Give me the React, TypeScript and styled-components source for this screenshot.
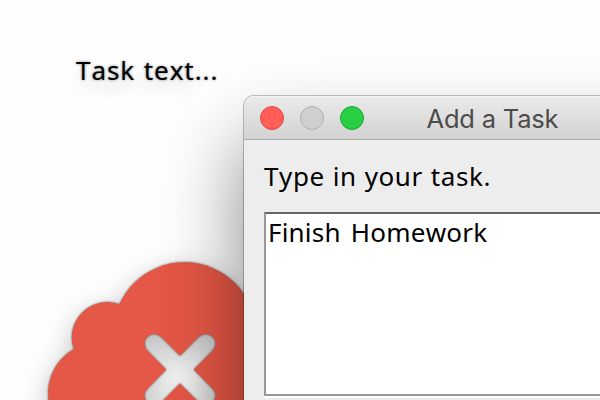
import React from "react";
import styled, { createGlobalStyle } from "styled-components";

const GlobalStyle = createGlobalStyle`
  * { box-sizing: border-box; }
  body { margin: 0; background: #fff; overflow: hidden; }
`;

const Desktop = styled.main`
  position: relative;
  width: 600px;
  height: 400px;
  overflow: hidden;
  background: #fefefe;
  color: #000;
  font-family: "Noto Sans", "Liberation Sans", sans-serif;
  font-size: 26px;
  line-height: 36px;
  font-kerning: none;
`;

const TaskLabel = styled.p`
  margin: 0;
  padding: 52px 0 0 76px;
  white-space: nowrap;
  letter-spacing: 0.95px;
  word-spacing: 0.8px;
  -webkit-text-stroke: 0.15px #000;
  text-shadow: 0 0 3px rgba(0, 0, 0, 0.45), 0 9px 18px rgba(0, 0, 0, 0.2);
`;

const CloudArt = styled.svg`
  position: absolute;
  left: 0;
  top: 220px;
  overflow: visible;
  filter: drop-shadow(0 0 1px rgba(0, 0, 0, 0.6)) drop-shadow(0 9px 14px rgba(0, 0, 0, 0.25));
`;

const DialogWindow = styled.section`
  position: absolute;
  left: 244px;
  top: 96px;
  width: 560px;
  height: 440px;
  border-radius: 10px 10px 0 0;
  background: #ededed;
  box-shadow: 0 0 0 1px rgba(0, 0, 0, 0.24), 0 46px 80px rgba(0, 0, 0, 0.48);
`;

const TitleBar = styled.header`
  display: flex;
  align-items: center;
  height: 44px;
  padding-left: 16px;
  border-radius: 10px 10px 0 0;
  border-bottom: 1px solid #afafaf;
  background: linear-gradient(#ebebeb, #d2d2d2);
  box-shadow: inset 0 1px 0 #f5f5f5;
`;

const Lights = styled.div`
  display: flex;
  gap: 16px;
`;

const Light = styled.span<{ $fill: string; $edge: string }>`
  width: 24px;
  height: 24px;
  border-radius: 50%;
  border: 1px solid ${(p) => p.$edge};
  background: ${(p) => p.$fill};
`;

const Title = styled.h1`
  margin: 3px 0 0 62.5px;
  font: 400 25.5px/36px Inter, "Liberation Sans", sans-serif;
  font-kerning: normal;
  letter-spacing: -0.2px;
  color: #4c4c4c;
  white-space: nowrap;
`;

const Body = styled.div`
  padding: 18px 20px 0;
`;

const Prompt = styled.label`
  display: block;
  height: 54px;
  letter-spacing: 0.6px;
  word-spacing: 0.6px;
  white-space: nowrap;
`;

const TextField = styled.div`
  height: 184px;
  padding: 0 0 0 2px;
  border: 2px solid #999;
  border-top-color: #666;
  background: #fff;
  box-shadow: 0 2px 0 #fff;
  letter-spacing: 0.2px;
  word-spacing: 3.2px;
  white-space: nowrap;
`;

function Cloud() {
  return (
    <CloudArt width="320" height="240" viewBox="0 220 320 240" aria-hidden="true">
      <defs>
        <mask id="cross-cutout" maskUnits="userSpaceOnUse" x="0" y="220" width="320" height="260">
          <rect x="0" y="220" width="320" height="260" fill="#fff" />
          <path d="M154.2 343.6l51.6 52M205.8 343.6l-51.6 52" stroke="#000" strokeWidth="19.4" strokeLinecap="round" />
        </mask>
      </defs>
      <g fill="#e55746" mask="url(#cross-cutout)">
        <circle cx="184.5" cy="333.5" r="71.3" />
        <circle cx="107.3" cy="337.5" r="35.5" />
        <circle cx="98.8" cy="393.3" r="50.7" />
        <path d="M100 330h170v130H100z" />
      </g>
    </CloudArt>
  );
}

export default function App() {
  return (
    <>
      <GlobalStyle />
      <Desktop>
        <TaskLabel>Task text...</TaskLabel>
        <Cloud />
        <DialogWindow>
          <TitleBar>
            <Lights>
              <Light $fill="#ff5f58" $edge="#e2463f" />
              <Light $fill="#cfcfcf" $edge="#b1b1b1" />
              <Light $fill="#29ce42" $edge="#1aab29" />
            </Lights>
            <Title>Add a Task</Title>
          </TitleBar>
          <Body>
            <Prompt>Type in your task.</Prompt>
            <TextField>Finish Homework</TextField>
          </Body>
        </DialogWindow>
      </Desktop>
    </>
  );
}
